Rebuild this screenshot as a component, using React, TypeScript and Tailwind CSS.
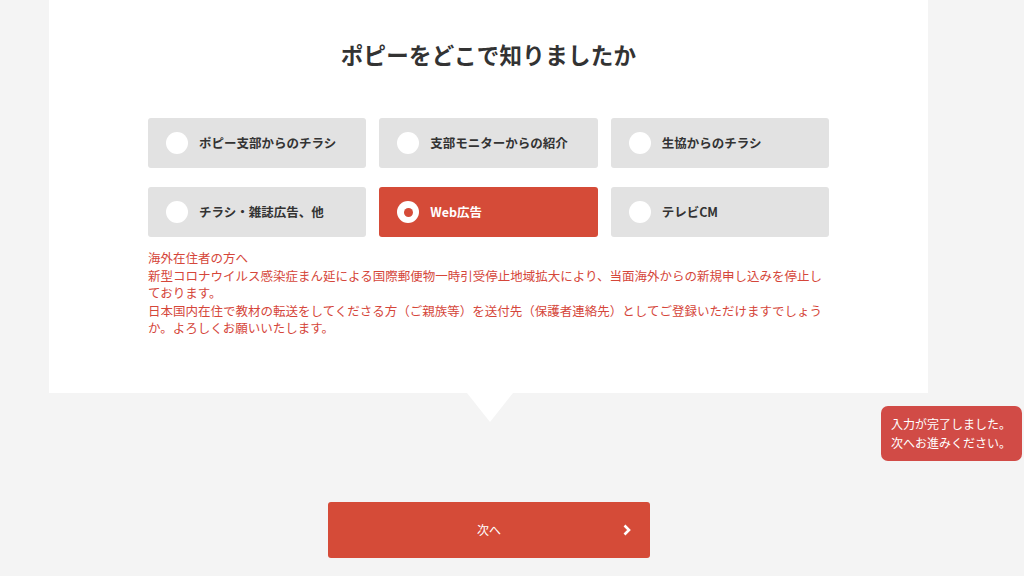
import React, { useState } from "react";

const options = [
  "ポピー支部からのチラシ",
  "支部モニターからの紹介",
  "生協からのチラシ",
  "チラシ・雑誌広告、他",
  "Web広告",
  "テレビCM",
];

const App = () => {
  const [selected, setSelected] = useState("Web広告");

  return (
    <div
      className="relative w-[1024px] h-[576px] overflow-hidden bg-[#f4f4f4] text-[#333]"
      style={{ fontFamily: '"Noto Sans CJK JP", "Noto Sans", sans-serif' }}
    >
      <div className="relative ml-[49px] w-[879px] h-[393px] bg-white pt-[39px]">
        <h2 className="text-center text-[22.5px] font-bold leading-[30px] tracking-[0.3px]">
          ポピーをどこで知りましたか
        </h2>
        <div className="mx-auto mt-[49px] w-[681px] grid grid-cols-3 gap-x-[13px] gap-y-[19px]">
          {options.map((opt) => {
            const active = selected === opt;
            return (
              <button
                key={opt}
                onClick={() => setSelected(opt)}
                className={`flex items-center h-[50px] px-[18px] gap-[11px] rounded-[3px] text-left ${
                  active ? "bg-[#d54b38] text-white" : "bg-[#e2e2e2] text-[#333]"
                }`}
              >
                <span className="flex items-center justify-center w-[22px] h-[22px] rounded-full bg-white shrink-0">
                  {active && <span className="w-[9px] h-[9px] rounded-full bg-[#d54b38]" />}
                </span>
                <span className="text-[12.5px] font-bold">{opt}</span>
              </button>
            );
          })}
        </div>
        <div className="mx-auto mt-[12px] w-[681px] text-[12.5px] leading-[17.6px] text-[#d5463a]">
          <p>海外在住者の方へ</p>
          <p>
            新型コロナウイルス感染症まん延による国際郵便物一時引受停止地域拡大により、当面海外からの新規申し込みを停止しております。
          </p>
          <p>
            日本国内在住で教材の転送をしてくださる方（ご親族等）を送付先（保護者連絡先）としてご登録いただけますでしょうか。よろしくお願いいたします。
          </p>
        </div>
        <div className="absolute left-[418px] top-full w-0 h-0 border-l-[23px] border-r-[23px] border-t-[29px] border-l-transparent border-r-transparent border-t-white" />
      </div>

      <div className="flex justify-start ml-[328px] mt-[109px]">
        <button className="relative flex items-center justify-center w-[322px] h-[56px] rounded-[3px] bg-[#d54b38] text-white text-[12px]">
          次へ
          <svg
            className="absolute right-[18px] top-1/2 -translate-y-1/2"
            width="10"
            height="12"
            viewBox="0 0 10 12"
          >
            <path d="M2.5 1.5 L7 6 L2.5 10.5" stroke="white" strokeWidth="2.6" fill="none" />
          </svg>
        </button>
      </div>

      <div className="absolute left-[881px] top-[406px] w-[141px] h-[55px] rounded-[7px] bg-[#d14b46] px-[10px] pt-[8px] text-white text-[12px] leading-[19px]">
        <p>入力が完了しました。</p>
        <p>次へお進みください。</p>
      </div>
    </div>
  );
};

export default App;
